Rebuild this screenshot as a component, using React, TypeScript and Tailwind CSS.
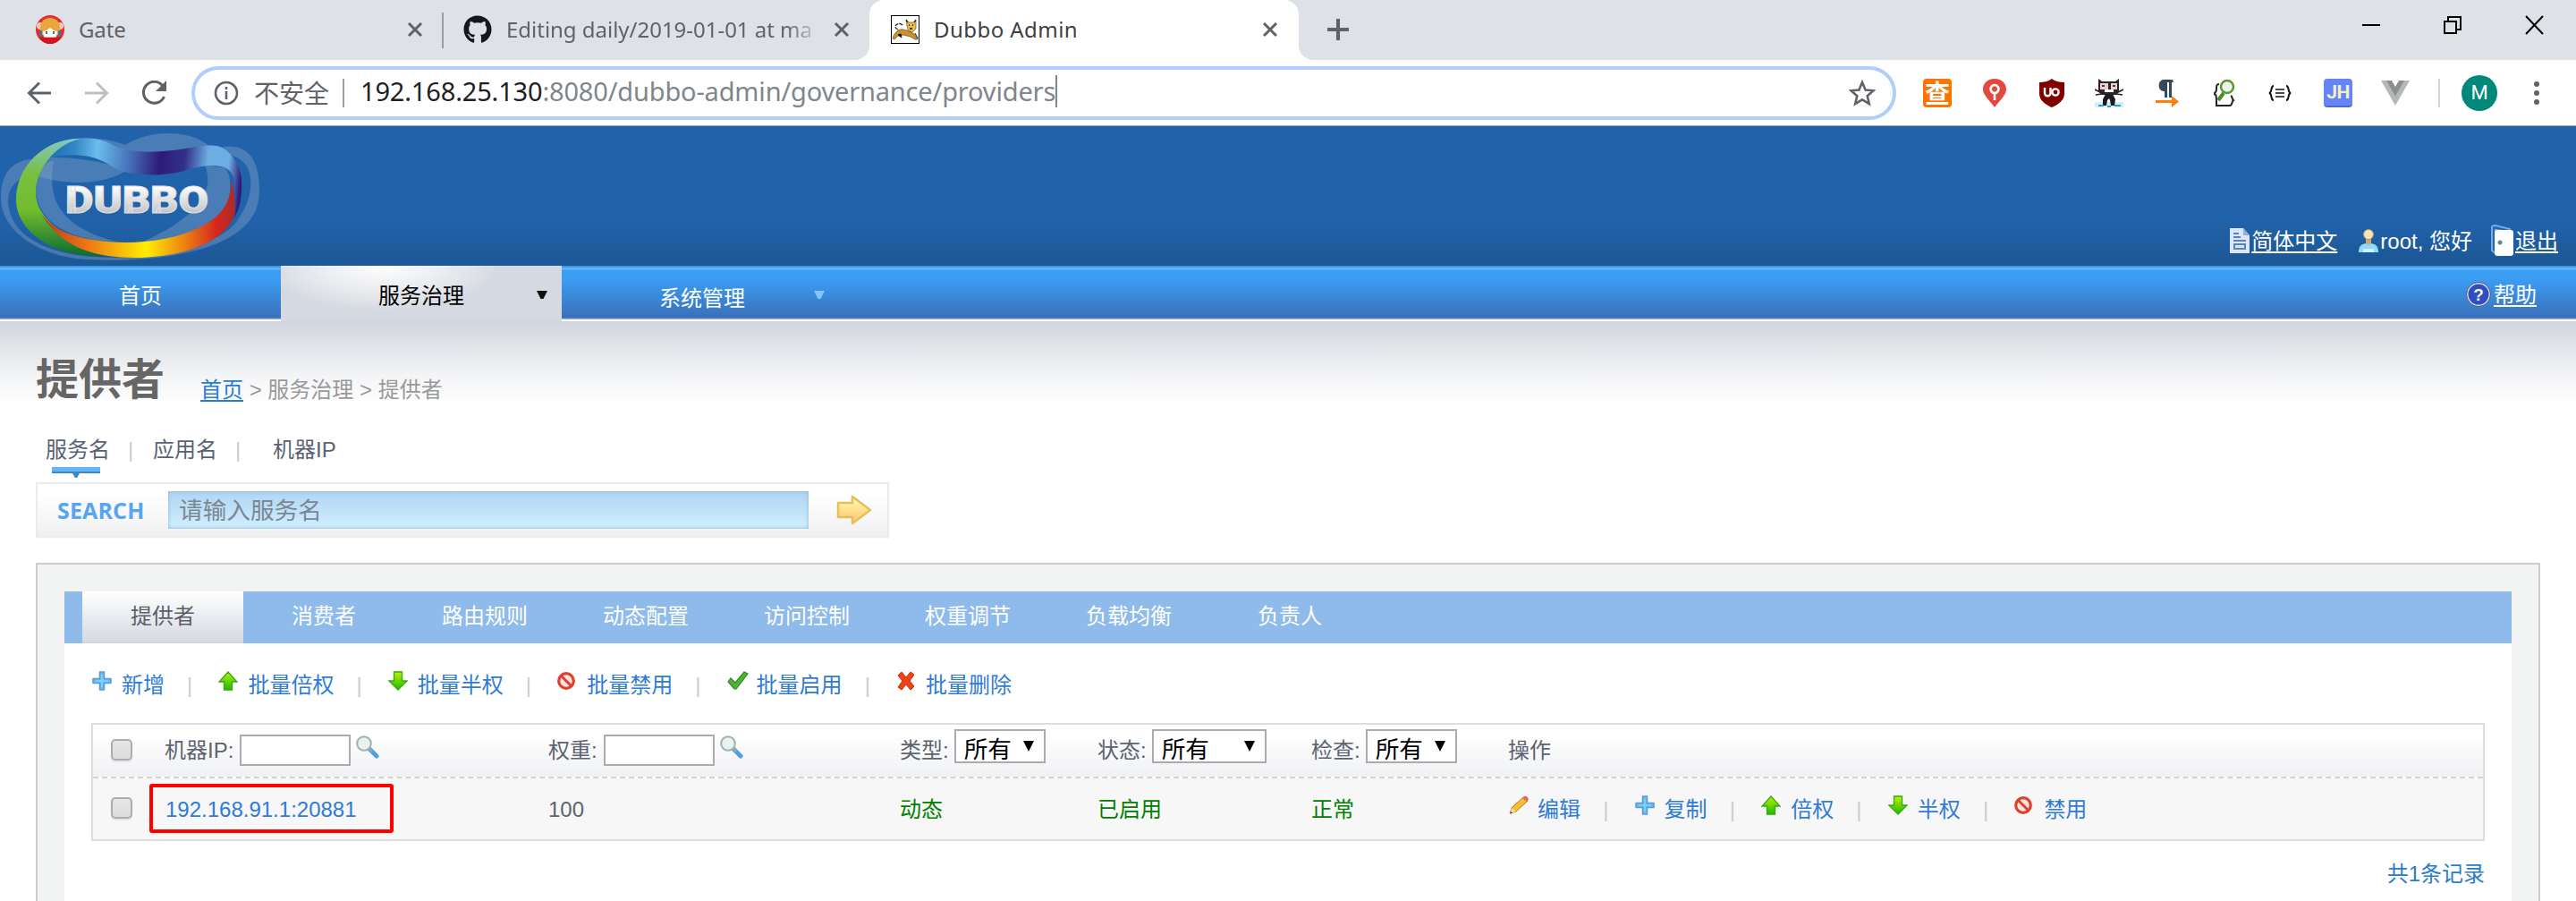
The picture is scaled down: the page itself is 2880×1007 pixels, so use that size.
import React from "react";
import { FaGithub } from "react-icons/fa";

const ui = "font-['Noto_Sans','Noto_Sans_CJK_SC',sans-serif]";

function TabClose({ className = "" }: { className?: string }) {
  return (
    <svg className={"shrink-0 " + className} width="18" height="18" viewBox="0 0 18 18">
      <path d="M2 2L16 16M16 2L2 16" stroke="#5f6368" strokeWidth="3" />
    </svg>
  );
}

function GateIcon() {
  return (
    <svg className="shrink-0" width="32" height="32" viewBox="0 0 32 32">
      <circle cx="16" cy="16" r="16" fill="#e02f2f" />
      <circle cx="5" cy="12" r="4" fill="#f6c8c0" />
      <circle cx="27" cy="12" r="4" fill="#f6c8c0" />
      <path d="M5 17C4 8 9 3 16 3C23 3 28 8 27 17L26 22H6Z" fill="#eba63e" />
      <path d="M4 17h3v7H5zM25 17h3l-1 7h-2z" fill="#2b7fa8" />
      <path d="M8 18l4-1 4-3 4 3 4 1-1 7H9z" fill="#fff" />
      <path d="M12 18v3M20 18v3" stroke="#333" strokeWidth="1.5" />
      <path d="M4 24c6 1 18 1 24 0-5 11-19 11-24 0z" fill="#d31323" />
    </svg>
  );
}

function TomcatIcon() {
  return (
    <svg className="shrink-0" width="32" height="32" viewBox="0 0 32 32">
      <rect x="0.5" y="0.5" width="31" height="31" fill="#fff" stroke="#000" />
      <path d="M13 11c-3-3-8-1-8 2 0 2 4 3 5 5" fill="none" stroke="#222" strokeWidth="1.3" strokeDasharray="4 1" />
      <path d="M2 26c2-6 6-11 12-10 5 1 9 3 12 5l4 6h-3l-5-3-8-2-6 1-4 4z" fill="#c8922c" stroke="#6b4a12" strokeWidth="0.7" />
      <path d="M8 22l4 3-1-4zM27 20l3 6" stroke="#111" fill="#111" />
      <path d="M17 6l3 2h5l3-2v9l-4 4-5-2z" fill="#e9bd4b" stroke="#7a5510" strokeWidth="0.7" />
      <path d="M17 5l2 3M28 5l-2 3M20 11h1M24 11h1M21 15h3" stroke="#111" strokeWidth="1.3" />
    </svg>
  );
}

function TabStrip() {
  return (
    <div className={"flex h-[67px] items-start bg-[#dee1e6] text-[24px] leading-[32px] text-[#5f6368] " + ui}>
      <div className="flex h-[67px] w-[494px] items-start pt-[17px] pl-10">
        <GateIcon />
        <span className="ml-4 flex-1 tracking-[-0.1px]">Gate</span>
        <TabClose className="mt-[7px] mr-[21px]" />
      </div>
      <div className="mt-[14px] h-10 w-[2px] bg-[#9a9da1]" />
      <div className="flex h-[67px] w-[476px] items-start pt-[17px] pl-[22px]">
        <FaGithub size={32} color="#14171b" className="shrink-0" />
        <span className="ml-[16px] w-[352px] tracking-[-0.02px] whitespace-nowrap [mask-image:linear-gradient(to_right,#000_89%,transparent)]">
          Editing daily/2019-01-01 at ma
        </span>
        <TabClose className="mt-[7px] ml-[14px]" />
      </div>
      <div className="relative flex h-[67px] w-[480px] items-start rounded-t-[16px] bg-white pt-[17px] pl-6 text-[#3c4043]">
        <svg className="absolute bottom-0 -left-4" width="16" height="16">
          <path d="M16 0V16H0A16 16 0 0 0 16 0Z" fill="#fff" />
        </svg>
        <svg className="absolute -right-4 bottom-0" width="16" height="16">
          <path d="M0 0V16H16A16 16 0 0 1 0 0Z" fill="#fff" />
        </svg>
        <TomcatIcon />
        <span className="ml-4 flex-1 tracking-[0.45px]">Dubbo Admin</span>
        <TabClose className="mt-[7px] mr-[23px]" />
      </div>
      <svg className="mt-[20px] ml-[31px]" width="26" height="26">
        <path d="M13 1V25M1 13H25" stroke="#5f6368" strokeWidth="4" />
      </svg>
      <div className="flex-1" />
      <svg className="mt-[17px] mr-9" width="203" height="24" fill="none" stroke="#000" strokeWidth="2">
        <path d="M0 11H20M92 7H105V20H92ZM96 6V2H110V16H106" />
        <path d="M183 1L202 21M202 1L183 21" />
      </svg>
    </div>
  );
}

function Extensions() {
  return (
    <>
      <span className="ml-[30px] flex size-8 items-center justify-center rounded-[4px] bg-[#ff7300] text-[28px] leading-8 font-bold text-white">
        查
      </span>
      <svg className="ml-[35px]" width="26" height="32" viewBox="0 0 26 32">
        <path d="M13 0C5 0 0 5 0 12C0 18 7 24 13 32C19 24 26 18 26 12C26 5 21 0 13 0Z" fill="#e5483f" />
        <path d="M13 7a4.5 4.5 0 1 0 .01 0M13 16V24" fill="none" stroke="#fff" strokeWidth="2.6" />
      </svg>
      <svg className="ml-[37px]" width="28" height="32" viewBox="0 0 28 32">
        <path d="M14 0C10 3 5 4 0 4V17C0 24 7 29 14 32C21 29 28 24 28 17V4C23 4 18 3 14 0Z" fill="#800000" />
        <path d="M6 10V16a3 3 0 0 0 6.500 0V10" fill="none" stroke="#fff" strokeWidth="2.4" />
        <circle cx="18" cy="15" r="3.600" fill="none" stroke="#fff" strokeWidth="2.4" />
      </svg>
      <svg className="ml-[34px]" width="32" height="32" viewBox="0 0 32 32">
        <path d="M0 26h32v6H0z" fill="#d5eff8" />
        <path d="M4 0l4 3h15l4-3v14l-3 4H8l-4-4z" fill="#2b2527" />
        <path d="M6 5h9v7H6zM18 5h7v7h-7z" fill="#e9d3d1" />
        <path d="M8 8h3M20 8h3" stroke="#5c3b39" strokeWidth="2" />
        <path d="M11 12h10v3H11z" fill="#fff" />
        <path d="M0 12l8 4M32 12l-8 4M1 18l7-1M31 18l-7-1" stroke="#222" strokeWidth="1.6" />
        <path d="M12 17h8l3 6-1 7h-4l-1-6-1-2-2 2-1 6H9V23z" fill="#1d1a20" />
        <path d="M4 30h6M22 30h7M14 31h4" stroke="#27a5cf" strokeWidth="2" />
      </svg>
      <svg className="ml-[36px]" width="26" height="32" viewBox="0 0 26 32">
        <path d="M19 1H8a7 7 0 0 0 0 13h2v7h3V4h2v17h3V4h2z" fill="#34495e" />
        <path d="M0 24h18v-5l8 6.5-8 6.500v-5H0z" fill="#ff7f0e" />
      </svg>
      <svg className="ml-[39px]" width="24" height="32" viewBox="0 0 24 32" fill="none">
        <path d="M6 6C3 6 3 8 3 12C3 16 0 16 0 17C3 17 3 19 3 30H18C21 30 20 25 22 24C20 22 21 20 19 19" stroke="#222" strokeWidth="2" />
        <circle cx="15" cy="9" r="7" stroke="#5a9a2c" strokeWidth="2.500" fill="#eff3ee" />
        <path d="M11 16L5 24" stroke="#4c8a24" strokeWidth="4" />
      </svg>
      <svg className="ml-[37px]" width="26" height="18" viewBox="0 0 26 18" fill="none" stroke="#111" strokeWidth="2">
        <path d="M6 1C2 1 5 8 1 9C5 10 2 17 6 17M20 1C24 1 21 8 25 9C21 10 24 17 20 17" />
        <path d="M8 5H18M8 9H18M8 13H18" strokeWidth="1.7" />
      </svg>
      <span className="ml-[36px] flex size-8 items-center justify-center rounded-[4px] border-b-2 border-[#5369c4] bg-[#6484f7] font-['Roboto'] text-[21px] leading-8 font-bold tracking-[-0.5px] text-[#f3f1c4]">
        JH
      </span>
      <svg className="ml-8" width="32" height="28" viewBox="0 0 32 28">
        <path d="M0 0H8L16 14L24 0H32L16 28Z" fill="#b5b8b8" />
        <path d="M6 0H12L16 7L20 0H26L16 17.500Z" fill="#8d9090" />
      </svg>
      <div className="ml-[32px] h-8 w-[2px] bg-[#d2d4d7]" />
      <span className="ml-6 flex size-10 items-center justify-center rounded-full bg-[#00897b] font-['Roboto'] text-[22px] text-white">M</span>
      <svg className="ml-[41px]" width="6" height="28" fill="#5f6368">
        <circle cx="3" cy="4" r="3" />
        <circle cx="3" cy="14" r="3" />
        <circle cx="3" cy="24" r="3" />
      </svg>
    </>
  );
}

function Toolbar() {
  return (
    <div className={"flex h-[74px] items-center border-b border-[#a8a8a8] bg-white " + ui}>
      <svg className="ml-[30px]" width="28" height="28" fill="none" stroke="#5f6368" strokeWidth="3">
        <path d="M27 14H3M14 2.500L2.500 14L14 25.500" />
      </svg>
      <svg className="ml-[36px]" width="28" height="28" fill="none" stroke="#bdbfc2" strokeWidth="3">
        <path d="M1 14H25M14 2.500L25.500 14L14 25.500" />
      </svg>
      <svg className="ml-[36px]" width="30" height="28" viewBox="0 0 30 28">
        <path d="M24 6A12 12 0 1 0 25.500 18" fill="none" stroke="#5f6368" strokeWidth="3" />
        <path d="M28 0V12H16Z" fill="#5f6368" />
      </svg>
      <div className="ml-[26px] flex h-[60px] w-[1906px] items-center rounded-full border-4 border-[#b1cdfb]">
        <svg className="ml-[21px]" width="28" height="28" fill="none" stroke="#5f6368" strokeWidth="2.6">
          <circle cx="14" cy="14" r="12" />
          <path d="M14 12V21M14 7V10" />
        </svg>
        <span className="ml-[17px] text-[28px] leading-[36px] text-[#5f6368]">不安全</span>
        <div className="ml-[15px] h-8 w-[2px] bg-[#9aa0a6]" />
        <span className="-mt-[3px] ml-[18px] text-[29px] leading-[36px] tracking-[-0.17px] whitespace-nowrap text-[#80868b]">
          <span className="text-[#202124]">192.168.25.130</span>:8080/dubbo-admin/governance/providers
        </span>
        <div className="-mt-1 h-9 w-[2px] bg-[#80868b]" />
        <svg className="mr-[19px] ml-auto" width="30" height="30" viewBox="0 0 30 30">
          <path d="M15 3L18.600 11.600L27.500 12.300L20.700 18.200L22.800 27L15 22.300L7.200 27L9.300 18.200L2.500 12.300L11.400 11.600Z" fill="none" stroke="#5f6368" strokeWidth="2.6" />
        </svg>
      </div>
      <Extensions />
    </div>
  );
}

function Logo() {
  return (
    <svg className="shrink-0" width="292" height="156" viewBox="0 0 292 156">
      <defs>
        <linearGradient id="green" x1="0" y1="14" x2="0" y2="146" gradientUnits="userSpaceOnUse">
          <stop offset="0" stopColor="#83c9c4" />
          <stop offset="0.3" stopColor="#77c03f" />
          <stop offset="0.6" stopColor="#74bd2d" />
          <stop offset="1" stopColor="#0a6b34" />
        </linearGradient>
        <linearGradient id="warm" x1="46" y1="0" x2="264" y2="0" gradientUnits="userSpaceOnUse">
          <stop offset="0" stopColor="#b23a22" />
          <stop offset="0.23" stopColor="#ec7514" />
          <stop offset="0.54" stopColor="#ffee00" />
          <stop offset="0.72" stopColor="#ee8a12" />
          <stop offset="0.9" stopColor="#d5261e" />
          <stop offset="1" stopColor="#a82c2c" />
        </linearGradient>
        <linearGradient id="cool" x1="57" y1="30" x2="270" y2="50" gradientUnits="userSpaceOnUse">
          <stop offset="0" stopColor="#1d74b4" />
          <stop offset="0.12" stopColor="#3287c4" />
          <stop offset="0.24" stopColor="#6abdec" />
          <stop offset="0.4" stopColor="#4777bd" />
          <stop offset="0.57" stopColor="#2d1b78" />
          <stop offset="0.7" stopColor="#33308a" />
          <stop offset="0.82" stopColor="#6caee2" />
          <stop offset="0.93" stopColor="#6caee2" />
          <stop offset="1" stopColor="#2d1b78" />
        </linearGradient>
        <linearGradient id="letters" x1="0" y1="0" x2="0" y2="1">
          <stop offset="0.2" stopColor="#ffffff" />
          <stop offset="0.8" stopColor="#c4c4c6" />
        </linearGradient>
      </defs>
      <g fill="#82a3c6" fillOpacity="0.42" fillRule="evenodd">
        <path d="M1 80C1 55 12 38 36 37C42 36 44 42 44 54C20 55 8 68 9 86C12 122 50 142 104 146C160 149 230 142 262 110C282 85 284 60 276 45C268 32 250 30 244 32C242 26 246 22 261 23C282 25 290 45 290 70C290 90 284 102 272 113C235 147 150 152 100 149C50 148 1 120 1 80Z" />
        <path d="M36 37C70 32 95 38 110 40C128 44 134 48 139 51C110 68 66 64 42 56Z" />
        <path d="M90 15C110 12 122 15 140 21C155 12 170 8 189 8C212 8 228 16 236 24C210 32 140 36 118 20Z" />
        <path d="M229 44C240 70 225 100 160 129C200 128 235 115 250 98C262 75 258 45 248 46Z" />
        <path d="M60 38C55 70 55 110 130 129C80 128 45 110 40 74C42 50 50 40 60 38Z" />
      </g>
      <path d="M57 35C64 22 72 15 84 14C98 12 108 14 118 17C128 22 136 26 147 27C165 31 200 27 219 23C230 21 240 21 246 23C258 28 268 42 270 58C271 80 268 95 260 105C264 90 263 70 261 57C258 50 254 46 246 45C228 43 222 46 202 51C180 56 155 55 139 51C125 47 118 38 100 34C85 31 70 32 57 35Z" fill="url(#cool)" />
      <path d="M90 14C50 13 18 45 18 82C18 116 55 143 104 145L116 146C72 122 40 104 40 74C40 48 62 20 90 14Z" fill="url(#green)" />
      <path d="M46 98C60 118 90 129 140 130C185 130 225 118 245 98C255 88 258 75 259 60C263 80 265 98 258 108C240 135 195 147 150 147C100 147 66 132 46 98Z" fill="url(#warm)" />
      <text x="73" y="97" fontFamily="Roboto" fontWeight="900" fontSize="43" textLength="160" lengthAdjust="spacingAndGlyphs" fill="url(#letters)" stroke="#e2e2e4" strokeWidth="1">
        DUBBO
      </text>
    </svg>
  );
}

function Banner() {
  return (
    <div className="flex h-[156px] bg-[linear-gradient(to_bottom,#2163ab_65%,#1c5795)] text-[24px] leading-[30px] text-white">
      <Logo />
      <div className="mt-[114px] mr-5 ml-auto flex">
        <svg width="22" height="28" viewBox="0 0 22 28">
          <path d="M0 0H15L22 8V28H0Z" fill="#dbe6f8" />
          <path d="M15 0V8H22Z" fill="#93add6" />
          <path d="M4 6H10M4 10H12M4 14H18M5 18H17V23H5Z" fill="none" stroke="#5685bd" strokeWidth="2" />
        </svg>
        <a className="ml-[2px] underline decoration-2 underline-offset-[3px]">简体中文</a>
        <svg className="ml-6" width="22" height="28" viewBox="0 0 22 28">
          <path d="M0 27C0 19 4 17 11 17C18 17 22 19 22 27Z" fill="#8cdcf8" />
          <path d="M5 23H17V27H5Z" fill="#c8f1fd" />
          <path d="M8 9H14V17L11 19L8 17Z" fill="#cda577" />
          <circle cx="11" cy="7" r="5.500" fill="#fbe3b2" stroke="#a99580" />
        </svg>
        <span className="ml-[2px]">root, 您好</span>
        <svg className="-mt-[4px] ml-[21px]" width="26" height="36" viewBox="0 0 26 36">
          <path d="M1 29V3C1 1 3 1 5 1L21 5V8L5 6V32Z" fill="#2265b0" stroke="#74abea" strokeWidth="2" />
          <rect x="4" y="6" width="21" height="29" rx="3" fill="#fff" />
          <circle cx="10" cy="20" r="2.500" fill="#5583c4" />
        </svg>
        <a className="ml-px underline decoration-2 underline-offset-[3px]">退出</a>
      </div>
    </div>
  );
}

function Caret({ color, className = "" }: { color: string; className?: string }) {
  return (
    <svg className={"absolute " + className} width="12" height="10">
      <path d="M0 0H12L7.500 9H4.500Z" fill={color} />
    </svg>
  );
}

function Nav() {
  return (
    <div className="flex h-[62px] border-b-2 border-white bg-[linear-gradient(to_bottom,#3c97ea_0px,#3c97ea_2px,#66b4f8_2px,#66b4f8_4px,#3a9ff5_5px,#3b9df2_15px,#3a72bc_56px,#3c6fb9_58px,#7f9fd0_59px,#a8bfe0_60px)] text-[24px] leading-[30px] text-white">
      <div className="w-[314px] pt-[19px] text-center">首页</div>
      <div className="relative h-[62px] w-[314px] bg-[radial-gradient(ellipse_130px_50px_at_36%_0,#fdfdfd,#f0f1f3_40%,#dde1e6_85%,#d5d9e1)] pt-[19px] text-center text-black">
        服务治理
        <Caret color="#111" className="top-7 left-[286px]" />
      </div>
      <div className="relative w-[314px] pt-[22px] text-center">
        系统管理
        <Caret color="#84c4fb" className="top-7 left-[282px]" />
      </div>
      <div className="mt-[18px] mr-11 ml-auto flex">
        <svg width="28" height="28" viewBox="0 0 28 28">
          <circle cx="14" cy="14" r="12.500" fill="#2f4fc0" stroke="#d7dce8" strokeWidth="2" />
          <circle cx="14" cy="14" r="13.500" fill="none" stroke="#4a5a80" />
          <text x="14" y="21" textAnchor="middle" fontFamily="Liberation Sans" fontWeight="700" fontSize="19" fill="#f1f3fa">?</text>
        </svg>
        <a className="ml-[3px] underline decoration-2 underline-offset-[3px]">帮助</a>
      </div>
    </div>
  );
}

function Magnifier() {
  return (
    <svg className="mt-[12px] ml-[6px] shrink-0" width="26" height="26" viewBox="0 0 26 26">
      <path d="M15 15L23 23" stroke="#4f9fe2" strokeWidth="5" strokeLinecap="round" />
      <path d="M14 14L18 18" stroke="#93a6b4" strokeWidth="3" />
      <circle cx="9" cy="9" r="7.800" fill="#e6f3ee" stroke="#a5b0b4" strokeWidth="2" />
    </svg>
  );
}

const PlusIcon = () => (
  <svg width="22" height="22" viewBox="0 0 22 22">
    <path d="M8.500 1H13.500V8.500H21V13.500H13.500V21H8.500V13.500H1V8.500H8.500Z" fill="#66b9f0" stroke="#5a9bd6" strokeWidth="1.500" strokeLinejoin="round" />
    <path d="M11 4V18M4 11H18" stroke="#7cd0f8" strokeWidth="2" />
  </svg>
);
const UpIcon = () => (
  <svg width="22" height="22" viewBox="0 0 22 22">
    <defs>
      <linearGradient id="up" x1="0" y1="0" x2="0" y2="1">
        <stop stopColor="#b6f500" />
        <stop offset="1" stopColor="#1fb800" />
      </linearGradient>
    </defs>
    <path d="M11 1L21 12H15.500V21H6.500V12H1Z" fill="url(#up)" stroke="#36a810" strokeWidth="1.3" />
  </svg>
);
const DownIcon = () => (
  <svg width="22" height="22" viewBox="0 0 22 22">
    <path d="M11 21L21 11H15.500V1H6.500V11H1Z" fill="url(#up)" stroke="#36a810" strokeWidth="1.3" />
  </svg>
);
const BanIcon = () => (
  <svg width="22" height="22" viewBox="0 0 22 22" fill="none">
    <circle cx="10" cy="11" r="8.300" fill="#f8e4df" stroke="#d9432f" strokeWidth="3.200" />
    <path d="M4.500 5.500L15.500 16.500" stroke="#d9432f" strokeWidth="3" />
  </svg>
);
const CheckIcon = () => (
  <svg width="24" height="22" viewBox="0 0 24 22">
    <path d="M1 12L4 8L9 13L19 1L23 3L10 20H8Z" fill="#4fb535" stroke="#2c8a22" strokeWidth="1.200" />
  </svg>
);
const CrossIcon = () => (
  <svg width="22" height="22" viewBox="0 0 22 22">
    <path d="M2 5L6 1L11 7L16 1L20 4L15 11L20 17L16 21L11 15L6 21L2 18L7 11Z" fill="#ee4310" stroke="#c32e0c" />
  </svg>
);
const PencilIcon = () => (
  <svg width="24" height="22" viewBox="0 0 24 22">
    <path d="M2 20L4 14L17 2L22 6L9 18Z" fill="#f6bf2e" stroke="#b87a1a" />
    <path d="M2 20L4 14L9 18Z" fill="#f7ddb1" />
    <path d="M16 3L18 1C20 -0.500 24 3 22.500 5L21 7Z" fill="#df6b64" />
    <path d="M2 20.500L3 18L5 19.500Z" fill="#333" />
  </svg>
);

function ActionList({ items, wide }: { items: [React.ReactNode, string][]; wide?: boolean }) {
  return (
    <div className="flex text-[24px] leading-[30px] whitespace-nowrap text-[#2f7bd6]">
      {items.map(([icon, label], i) => (
        <React.Fragment key={label}>
          {i > 0 && (
            <span className={"shrink-0 pr-1 text-center text-[#ccc] " + (wide ? "w-[60.4px]" : "w-[60.6px]")}>|</span>
          )}
          <span className="-mt-px w-[33px] shrink-0">{icon}</span>
          <a>{label}</a>
        </React.Fragment>
      ))}
    </div>
  );
}

function Checkbox() {
  return <span className="mt-4 ml-5 block size-6 rounded-[5px] border-2 border-[#acacac] bg-[linear-gradient(to_bottom,#e6e6e6,#dcdcdc)] shadow-[0_2px_1px_#e4e4e4]" />;
}

function SelectBox({ wide }: { wide?: boolean }) {
  return (
    <span
      className={
        "mt-[5px] ml-[6px] flex h-[38px] border-2 border-[#ababab] bg-white pl-[9px] text-[26.67px] leading-[42px] text-black " +
        (wide ? "w-[128px]" : "w-[102px]")
      }
    >
      所有
      <svg className="mt-[11px] mr-[11px] ml-auto" width="12" height="12">
        <path d="M0 0H12L6 12Z" fill="#000" />
      </svg>
    </span>
  );
}

const grid = "grid grid-cols-[80px_429px_393px_221px_239px_220px_1fr]";

function ProviderTable() {
  return (
    <div className="mx-[30px] mt-[27px] h-[132px] border-2 border-[#ddd] bg-[#f7f7f7] text-[24px] text-[#5b6470]">
      <div className={grid + " h-[60px] border-b-2 border-dashed border-[#d3d3d3] bg-[linear-gradient(to_bottom,#fff_15%,#f0f1f4)] leading-[57px]"}>
        <Checkbox />
        <div className="flex">
          机器IP:
          <span className="mt-[11px] ml-[7px] h-[35px] w-[124px] border-2 border-[#acacac] bg-white" />
          <Magnifier />
        </div>
        <div className="flex">
          权重:
          <span className="mt-[11px] ml-[7px] h-[35px] w-[124px] border-2 border-[#acacac] bg-white" />
          <Magnifier />
        </div>
        <div className="flex">
          类型:
          <SelectBox />
        </div>
        <div className="flex">
          状态:
          <SelectBox wide />
        </div>
        <div className="flex">
          检查:
          <SelectBox />
        </div>
        <div>操作</div>
      </div>
      <div className={grid + " h-[68px] leading-[69px]"}>
        <div className="pt-[5px]">
          <Checkbox />
        </div>
        <div className="relative pl-px text-[#2f7bd6]">
          192.168.91.1:20881
          <span className="absolute top-[6px] left-[-17px] h-[55px] w-[273px] rounded-[3px] border-4 border-[#f00]" />
        </div>
        <div>100</div>
        <div className="text-[#008000]">动态</div>
        <div className="text-[#008000]">已启用</div>
        <div className="text-[#008000]">正常</div>
        <div className="pt-5">
          <ActionList
            items={[
              [<PencilIcon />, "编辑"],
              [<PlusIcon />, "复制"],
              [<UpIcon />, "倍权"],
              [<DownIcon />, "半权"],
              [<BanIcon />, "禁用"],
            ]}
          />
        </div>
      </div>
    </div>
  );
}

const tabs = ["提供者", "消费者", "路由规则", "动态配置", "访问控制", "权重调节", "负载均衡", "负责人"];

export default function App() {
  return (
    <div className="h-[1007px] w-[2880px] overflow-hidden bg-white">
      <TabStrip />
      <Toolbar />
      <div className="font-['Liberation_Sans','Noto_Sans_CJK_SC',sans-serif]">
        <Banner />
        <Nav />
        <div className="bg-[linear-gradient(to_bottom,#d0d5de_0px,#e3e6ea_32px,#f3f4f6_60px,#fff_94px)]">
          <div className="flex h-[92px] pt-[38px] pl-10">
            <h1 className="w-[144px] text-[48px] leading-[56px] font-bold text-[#666]">提供者</h1>
            <div className="mt-[24px] ml-10 text-[24px] leading-[30px] text-[#999]">
              <a className="text-[#2a7bd9] underline decoration-2 underline-offset-[3px]">首页</a> &gt; 服务治理 &gt; 提供者
            </div>
          </div>
          <div className="mt-[37px] flex h-[50px] pl-[51px] text-[24px] leading-[30px] text-[#586274]">
            <div className="relative w-[72px]">
              服务名
              <svg className="absolute top-[34px] left-[7px]" width="54" height="12">
                <path d="M0 0H54V5H0Z" fill="#66b5f8" />
                <path d="M0 5H54V7H0Z" fill="#3b86c4" />
                <path d="M23 7H31L28 12H26Z" fill="#3b86c4" />
              </svg>
            </div>
            <span className="w-[48px] pr-[2px] text-center text-[#ccc]">|</span>
            <span>应用名</span>
            <span className="w-[48px] pr-[2px] text-center text-[#ccc]">|</span>
            <span className="ml-[14px]">机器IP</span>
          </div>
          <div className="mt-px ml-10 flex h-[62px] w-[954px] border-2 border-[#e7ecf0] bg-[linear-gradient(to_bottom,#fff_20%,#f0f0f0)]">
            <span className="w-[146px] pl-[22px] font-['Open_Sans'] text-[25px] leading-[59px] font-bold tracking-[0.15px] text-[#56a5f1]">SEARCH</span>
            <span className="mt-2 h-[42px] w-[716px] bg-[linear-gradient(to_bottom,#b0d4f4,#cbecfd_85%)] pl-3 text-[26.67px] leading-[45px] text-[#7c8794] shadow-[inset_0_0_4px_#8fb4cf]">
              请输入服务名
            </span>
            <svg className="mt-[12px] ml-[31px]" width="40" height="34" viewBox="0 0 40 34">
              <defs>
                <linearGradient id="go" x1="0" y1="0" x2="0" y2="1">
                  <stop stopColor="#fffbc0" />
                  <stop offset="0.5" stopColor="#ffe08c" />
                  <stop offset="1" stopColor="#ffbd80" />
                </linearGradient>
              </defs>
              <path d="M2 9H18V2L38 17L18 32V25H2Z" fill="url(#go)" stroke="#e5bf58" strokeWidth="2.500" strokeLinejoin="round" />
            </svg>
          </div>
          <div className="mx-10 mt-7 h-[400px] border-2 border-[#ccc] bg-[#f2f4f3] px-[30px] pt-[30px]">
            <div className="h-[380px] bg-white">
              <div className="flex h-[58px] bg-[#8ebbeb] pl-5 text-[24px] leading-[56px] text-white">
                {tabs.map((t, i) => (
                  <div
                    key={t}
                    className={"w-[180px] text-center " + (i === 0 ? "bg-[linear-gradient(to_bottom,#fff,#d3d8e0)] text-[#5a5f68]" : "")}
                  >
                    {t}
                  </div>
                ))}
              </div>
              <div className="mt-[32px] pl-[31px]">
                <ActionList
                  wide
                  items={[
                    [<PlusIcon />, "新增"],
                    [<UpIcon />, "批量倍权"],
                    [<DownIcon />, "批量半权"],
                    [<BanIcon />, "批量禁用"],
                    [<CheckIcon />, "批量启用"],
                    [<CrossIcon />, "批量删除"],
                  ]}
                />
              </div>
              <ProviderTable />
              <div className="mt-[22px] mr-[30px] text-right text-[24px] leading-[30px] text-[#2b7cc8]">共1条记录</div>
            </div>
          </div>
        </div>
      </div>
    </div>
  );
}
